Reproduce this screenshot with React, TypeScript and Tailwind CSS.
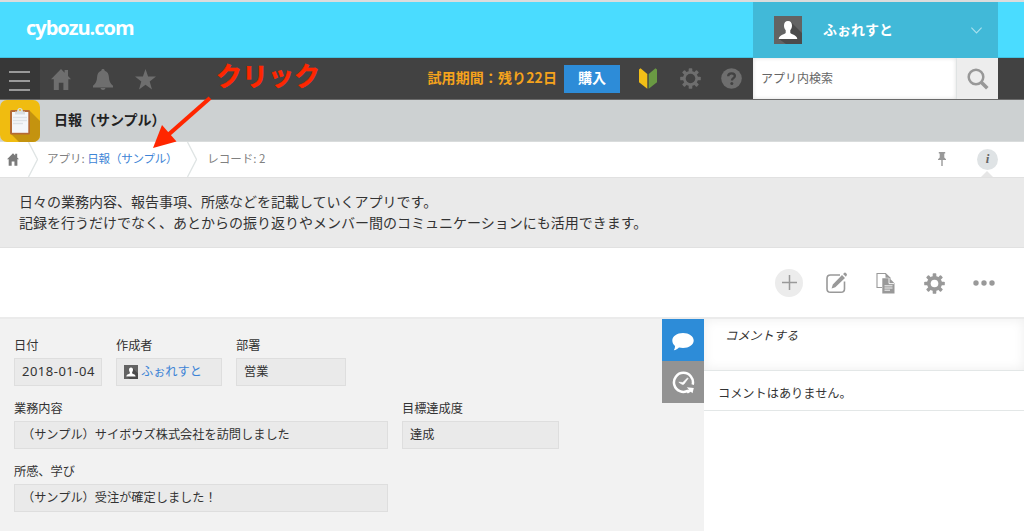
import type { ReactNode } from 'react'

const TOOTH_ANGLES = [0, 45, 90, 135]

function Gear({ hole }: { hole: string }) {
  return (
    <svg className="w-[21px] h-[21px]" viewBox="0 0 22 22" fill="currentColor">
      {TOOTH_ANGLES.map(a => (
        <rect key={a} x="9.1" y="0.2" width="3.8" height="21.6" rx="0.9" transform={`rotate(${a} 11 11)`} />
      ))}
      <circle cx="11" cy="11" r="7.900" />
      <circle cx="11" cy="11" className={hole} />
    </svg>
  )
}

function House({ className }: { className: string }) {
  return (
    <svg className={className} viewBox="0 0 20 21" fill="currentColor">
      <path d="M10 0 0 10.2h2.8V21h5v-7.3h4.6V21h4.9V10.2H20l-3-3.2V1h-3.4v2.8z" />
    </svg>
  )
}

function Bell() {
  return (
    <svg className="w-5 h-[21px]" viewBox="0 0 20 21" fill="currentColor">
      <path d="M10 0c1 0 1.7.7 1.7 1.7C14.6 2.5 15.7 5 15.9 8c.2 4 1.2 6.5 4.1 8.8v1.7H0v-1.7C2.9 14.5 3.9 12 4.1 8c.2-3 1.3-5.5 4.2-6.3C8.3.7 9 0 10 0z" />
      <path d="M7.5 19h5c-.3 1.3-1.3 2-2.5 2s-2.2-.7-2.5-2z" />
    </svg>
  )
}

function Star() {
  return (
    <svg className="w-[21px] h-[21px]" viewBox="0 0 21 21" fill="currentColor">
      <path d="m10.5 0 2.6 7.6H21l-6.3 4.8 2.3 8-6.5-4.7-6.5 4.7 2.3-8L0 7.6h7.9z" />
    </svg>
  )
}

function Person({ className }: { className: string }) {
  return (
    <svg className={className} viewBox="0 0 28 28">
      <rect width="28" height="28" fill="#636363" />
      <path d="M17 6 28 17v11H12l-7-5 10-3z" fill="#4b4b4b" />
      <path
        d="M14 5c2.7 0 4 1.9 4 4.5 0 2.2-.7 3.6-1.700 4.700v2.500c0 1.200 6.700 2 7 6.300H4.700c.3-4.300 7-5.100 7-6.300v-2.500C10.700 13.100 10 11.700 10 9.500 10 6.900 11.300 5 14 5z"
        fill="#fff"
      />
    </svg>
  )
}

function AppIcon() {
  return (
    <svg className="w-10 h-[42px] shrink-0" viewBox="0 0 40 42">
      <rect width="40" height="42" rx="7" fill="#f0bc10" />
      <path d="M29 10 40 21v14a7 7 0 0 1-7 7H19l-8-8z" fill="#c4930f" />
      <rect x="10" y="10" width="20" height="24.5" rx="1.5" fill="#b56a35" />
      <path d="M12 12h16.3v20.800H12z" fill="#f4f6fa" />
      <path d="M13 17.5h14M13 20.500h14M13 23.500h10" stroke="#dde1e6" strokeWidth="1.3" />
      <path d="M15 11.5h2c.2-2 1.200-3.500 3-3.500s2.800 1.500 3 3.500h2v3H15z" fill="#d9dee2" />
      <circle cx="20" cy="10" r="1" fill="#f0bc10" />
    </svg>
  )
}

function Chevron() {
  return (
    <svg className="w-[10px] h-[35px] shrink-0" viewBox="0 0 10 35" fill="none">
      <path d="M0.5 0 9.5 17.5 0.5 35" stroke="#dfe4e4" strokeWidth="1.3" />
    </svg>
  )
}

function Header() {
  return (
    <header className="flex h-14 bg-[#4adcff] border-b border-[#3fc2e2]">
      <div className="flex-1 pl-[26px] pt-[12px] font-['Open_Sans'] text-[20px] leading-7 font-bold tracking-[-1px] text-white">
        cybozu.com
      </div>
      <div className="flex items-center w-[245px] mr-[26px] -mb-px pl-[21px] pr-[16px] bg-[#41b9d8]">
        <Person className="w-7 h-7" />
        <span className="ml-[21px] mb-[3px] flex-1 text-[14px] leading-5 font-bold text-white">ふぉれすと</span>
        <svg className="w-[11px] h-[7px]" viewBox="0 0 11 7" fill="none" stroke="#a9e1ee" strokeWidth="1.1">
          <path d="m.4.6 5.1 5.4L10.6.6" />
        </svg>
      </div>
    </header>
  )
}

function NavBar() {
  return (
    <nav className="flex items-center h-[42px] bg-[#424242] border-b border-[#6a6a6a] text-[#6e6e6e]">
      <div className="flex flex-col gap-[7px] justify-center w-10 h-full pl-[9px] pt-1 bg-[#373737]">
        <i className="block w-[21px] h-[2px] bg-[#999]" />
        <i className="block w-[21px] h-[2px] bg-[#999]" />
        <i className="block w-[21px] h-[2px] bg-[#999]" />
      </div>
      <div className="flex items-center gap-[22px] pl-[11px] pt-px flex-1">
        <House className="w-5 h-[21px]" />
        <Bell />
        <Star />
      </div>
      <span className="mr-[7px] mb-[3px] text-[14px] leading-5 font-bold tracking-[0.1px] text-[#f5a31c]">試用期間：残り22日</span>
      <button className="w-14 h-7 pb-[3px] bg-[#2d8cd8] text-[14px] leading-5 font-bold text-white">購入</button>
      <svg className="w-[18px] h-[21px] ml-[19px]" viewBox="0 0 18 21">
        <path d="M1.5.2 8.3 6v14.8L0 14.2V1.500z" fill="#f2bf17" />
        <path d="M16.5.2 9.7 6v14.8L18 14.2V1.500z" fill="#6a9a43" />
      </svg>
      <div className="ml-[23px]">
        <Gear hole="[r:5px] fill-[#424242]" />
      </div>
      <svg className="w-[21px] h-[21px] ml-[20px] mr-[11px]" viewBox="0 0 21 21">
        <circle cx="10.5" cy="10.5" r="10.3" fill="#6e6e6e" />
        <path d="M7.2 8.3c0-2 1.4-3 3.400-3s3.300 1 3.300 2.700c0 2.200-3 2.200-3 4.600" fill="none" stroke="#424242" strokeWidth="2.3" />
        <circle cx="10.8" cy="15.6" r="1.5" fill="#424242" />
      </svg>
      <div className="flex h-full mr-[26px] bg-white">
        <div className="w-[203px] pl-2 pt-[11px] text-[12px] leading-[18px] text-[#666] shadow-[inset_0_0_4px_#ddd]">
          アプリ内検索
        </div>
        <div className="flex items-center justify-center w-[42px] bg-[#ededed] border-l border-[#dfe3e3]">
          <svg className="w-[22px] h-[22px]" viewBox="0 0 22 22" fill="none" stroke="#989898">
            <circle cx="9" cy="9" r="7.3" strokeWidth="2.5" />
            <path d="m14 14 6.3 6.3" strokeWidth="3.6" />
          </svg>
        </div>
      </div>
    </nav>
  )
}

function Breadcrumbs() {
  return (
    <div className="flex items-center h-[35px] bg-white text-[11.5px] leading-[18px] text-[#808080]">
      <House className="w-3 h-[13px] ml-[7px] mr-[9px] text-[#7a7a7a]" />
      <Chevron />
      <span className="ml-[9px] mb-[4px] whitespace-pre">アプリ: </span>
      <span className="w-[100px] mb-[4px] tracking-[-0.2px] text-[#3d84d6]">日報（サンプル）</span>
      <Chevron />
      <span className="ml-[10px] mb-[4px] flex-1">レコード: 2</span>
      <svg className="w-2 h-[14px] mr-[31px] mb-[2px]" viewBox="0 0 8 14" fill="#999">
        <path d="M.8 0h6.4v1.4H6.3v4L8 7.2v.9H4.7V14H3.3V8.1H0v-.9l1.7-1.8v-4H.8z" />
      </svg>
      <div className="relative self-stretch flex items-center w-[21px] mr-[26px]">
        <span className="w-[21px] h-[21px] rounded-full bg-[#dfe3e5] text-center font-['Liberation_Serif',serif] text-[13px] leading-[19px] font-bold italic text-[#666]">
          i
        </span>
        <svg className="absolute left-[4px] bottom-0 w-3 h-[6px]" viewBox="0 0 12 6">
          <path d="m0 6 6-6 6 6z" fill="#e6e6e6" />
        </svg>
      </div>
    </div>
  )
}

function Toolbar() {
  return (
    <div className="flex items-center h-[71px] pl-[775px] bg-white border-b-2 border-[#ebebeb] text-[#999]">
      <div className="flex items-center justify-center w-7 h-7 rounded-full bg-[#ececec]">
        <svg className="w-[15px] h-[15px]" viewBox="0 0 15 15" stroke="currentColor" strokeWidth="1.5">
          <path d="M7.5 0v15M0 7.5h15" />
        </svg>
      </div>
      <svg className="w-[22px] h-[22px] ml-[23px] mt-px" viewBox="0 0 22 22" fill="none">
        <path d="M14 3H4.5C2.3 3 1 4.2 1 6.5v10.2C1 19 2.3 20.3 4.500 20.300H15c2.200 0 3.500-1.300 3.500-3.600V9.500" stroke="currentColor" strokeWidth="1.6" />
        <path d="m16 3 3 3L9.300 15.300l-3.700 1.300 1.200-4zM17 2l1.500-1.300c.8-.6 3 1.500 2.400 2.400L19.900 4.700z" fill="currentColor" />
      </svg>
      <svg className="w-[19px] h-[22px] ml-[28px] mt-px" viewBox="0 0 19 22">
        <path d="M6 15.5H1v-14h8.500l5 5" fill="none" stroke="currentColor" strokeWidth="1.1" />
        <path d="M9.5 1.5v4.200h4z" fill="currentColor" />
        <path d="M6.3 6.3h7.300l4.900 4.900V21.500H6.300z" fill="currentColor" />
        <path d="M13 6.3v5.300h5.300" fill="none" stroke="#fff" strokeWidth=".9" />
        <path d="M8.5 13.8h8M8.500 16h8M8.500 18.200h5.500" stroke="#fff" strokeWidth=".9" />
      </svg>
      <div className="ml-[29px] mt-px">
        <Gear hole="[r:4px] fill-white" />
      </div>
      <svg className="w-[22px] h-[6px] ml-[28px] mt-px" viewBox="0 0 22 6" fill="currentColor">
        <circle cx="3" cy="3" r="2.7" />
        <circle cx="11" cy="3" r="2.7" />
        <circle cx="19" cy="3" r="2.7" />
      </svg>
    </div>
  )
}

function Field({ label, width, children }: { label: string; width: string; children: ReactNode }) {
  return (
    <div className={width}>
      <div className="h-[22px] text-[12.2px] leading-[18px]">{label}</div>
      <div className="flex items-center h-7 pl-[7px] pb-[2px] bg-[#eaeaea] border border-[#dedede] text-[12.2px] leading-[18px] whitespace-nowrap">
        {children}
      </div>
    </div>
  )
}

function RecordForm() {
  return (
    <section className="flex flex-col gap-[13px] w-[662px] shrink-0 pt-[17px] pl-[14px] bg-[#f2f2f2]">
      <div className="flex gap-[14px]">
        <Field label="日付" width="w-[88px]">
          <span className="font-['Noto_Sans'] text-[13px] tracking-[0.5px]">2018-01-04</span>
        </Field>
        <Field label="作成者" width="w-[106px]">
          <Person className="w-[14px] h-[14px] mt-[2px] mr-[3px]" />
          <span className="text-[#3d84d6]">ふぉれすと</span>
        </Field>
        <Field label="部署" width="w-[110px]">営業</Field>
      </div>
      <div className="flex gap-[14px]">
        <Field label="業務内容" width="w-[374px]">（サンプル）サイボウズ株式会社を訪問しました</Field>
        <Field label="目標達成度" width="w-[157px]">達成</Field>
      </div>
      <Field label="所感、学び" width="w-[374px]">（サンプル）受注が確定しました！</Field>
    </section>
  )
}

function CommentPanel() {
  return (
    <aside className="flex flex-1">
      <div className="w-[42px] bg-[#f2f2f2]">
        <div className="flex items-center justify-center h-[42px] bg-[#2d8cd8]">
          <svg className="w-[22px] h-[18px] mt-[3px]" viewBox="0 0 22 18" fill="#fff">
            <path d="M11 0c6 0 10.7 3.3 10.7 7.5S17 15 11 15c-1.400 0-2.700-.2-4-.5C5.500 16 4 17 1.800 17.300c.8-1.300 1.300-2.800 1.200-4.300C1.300 11.600.3 9.700.3 7.500.3 3.300 5 0 11 0z" />
          </svg>
        </div>
        <div className="flex items-center justify-center h-[42px] bg-[#939393]">
          <svg className="w-[23px] h-[23px]" viewBox="0 0 23 23" fill="none" stroke="#fff">
            <path d="M16.2 19.6A9.5 9.5 0 1 1 20.7 13.600" strokeWidth="2.5" />
            <path d="m6.8 11.2 4 .3 4.700-4.600.6.6-4.200 5.700-1.500.3z" fill="#fff" strokeWidth=".6" />
            <path d="m14.8 16.300 7 .6-1.300 5.400-1.700-1.600-3 1.900-1.700-2.400 2.700-1.800z" fill="#fff" stroke="none" />
          </svg>
        </div>
      </div>
      <div className="flex-1 bg-white">
        <div className="h-[52px] pl-[21px] pt-[7px] border-b border-[#e3e7e7] text-[12.2px] leading-[18px] italic shadow-[inset_0_0_12px_#eee]">
          コメントする
        </div>
        <div className="h-10 pl-[14px] pt-[13px] border-b border-[#e3e7e7] text-[12.2px] leading-[18px]">
          コメントはありません。
        </div>
      </div>
    </aside>
  )
}

function ClickHint() {
  return (
    <div className="absolute left-[152px] top-[58px] text-[#ff2600]">
      <div className="pl-[64px] text-[26px] leading-[34px] font-bold [-webkit-text-stroke:0.5px_#ff2600]">クリック</div>
      <svg className="absolute left-0 top-[37px] w-[62px] h-[54px]" viewBox="0 0 62 54">
        <path d="M58 3 16 40" stroke="currentColor" strokeWidth="4.2" />
        <path d="M1 53 10 30 24.5 46.5z" fill="currentColor" />
      </svg>
    </div>
  )
}

export default function App() {
  return (
    <div className="relative flex flex-col w-[1024px] h-[531px] overflow-hidden bg-white font-['Noto_Sans_CJK_JP',sans-serif] text-[#333]">
      <div className="h-[2px] shrink-0 bg-[#dcdcdc]" />
      <Header />
      <NavBar />
      <div className="flex items-center h-[42px] bg-[#cdd1d2] border-b border-[#d9dcdc]">
        <AppIcon />
        <h1 className="ml-[14px] mb-[3px] text-[14px] leading-5 font-bold text-[#222]">日報（サンプル）</h1>
      </div>
      <Breadcrumbs />
      <p className="h-[71px] pl-[19px] pt-[13px] bg-[#eaeaea] border-y border-[#e1e1e1] text-[14px] leading-[21px]">
        日々の業務内容、報告事項、所感などを記載していくアプリです。
        <br />
        記録を行うだけでなく、あとからの振り返りやメンバー間のコミュニケーションにも活用できます。
      </p>
      <Toolbar />
      <main className="flex flex-1">
        <RecordForm />
        <CommentPanel />
      </main>
      <ClickHint />
    </div>
  )
}
